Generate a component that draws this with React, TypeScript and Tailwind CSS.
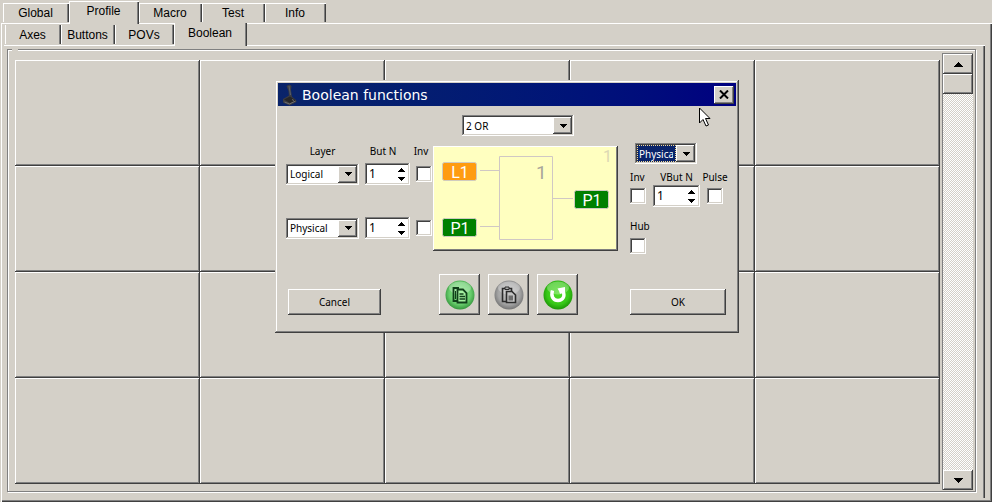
import React, { useState } from 'react';
import clsx from 'clsx';

const raised = 'bg-[#d4d0c8] shadow-[inset_-1px_-1px_0_#404040,inset_1px_1px_0_#fff,inset_-2px_-2px_0_#808080]';
const sunken = 'bg-white shadow-[inset_-1px_-1px_0_#fff,inset_1px_1px_0_#808080,inset_-2px_-2px_0_#d4d0c8,inset_2px_2px_0_#404040]';

interface TabItem {
  name: string;
  width: string;
}

const mainTabs: TabItem[] = [
  { name: 'Global', width: 'w-[66px]' },
  { name: 'Profile', width: 'w-[70px]' },
  { name: 'Macro', width: 'w-[63px]' },
  { name: 'Test', width: 'w-[63px]' },
  { name: 'Info', width: 'w-[61px]' },
];

const profileTabs: TabItem[] = [
  { name: 'Axes', width: 'w-[56px]' },
  { name: 'Buttons', width: 'w-[54px]' },
  { name: 'POVs', width: 'w-[59px]' },
  { name: 'Boolean', width: 'w-[73px]' },
];

const cells = Array.from({ length: 20 }, (_, i) => i + 1);

const Tabs: React.FC<{ items: TabItem[]; initial: string; className: string; topLine?: boolean }> = ({
  items,
  initial,
  className,
  topLine,
}) => {
  const [active, setActive] = useState(initial);

  return (
    <div role="tablist" className={clsx('flex items-end', className)}>
      {items.map(({ name, width }) => (
        <button
          key={name}
          role="tab"
          aria-selected={active === name}
          onClick={() => setActive(name)}
          className={clsx(
            'relative border-l border-l-white bg-[#d4d0c8] pr-0.5 text-center text-xs',
            'shadow-[inset_-1px_0_0_#404040,inset_-2px_0_0_#808080]',
            width,
            topLine && 'border-t border-t-white',
            active === name ? 'z-10 -mb-px h-[23px] pb-1' : 'mb-px h-[19px]'
          )}
        >
          {name}
        </button>
      ))}
    </div>
  );
};

const Arrow: React.FC<{ up?: boolean; large?: boolean }> = ({ up, large }) => (
  <svg
    viewBox="0 0 8 4"
    preserveAspectRatio="none"
    className={large ? 'h-[5px] w-2.5' : 'h-1 w-2'}
    shapeRendering="crispEdges"
    aria-hidden="true"
  >
    <path d={up ? 'M0 4h8L4 0z' : 'M0 0h8L4 4z'} />
  </svg>
);

const Combo: React.FC<{ label: string; options: string[]; className: string; focused?: boolean }> = ({
  label,
  options,
  className,
  focused,
}) => (
  <div className={clsx('relative h-[21px] p-0.5', sunken, className)}>
    <select
      aria-label={label}
      className={clsx(
        'block h-full w-full appearance-none overflow-hidden pl-0.5 outline-none',
        focused && 'bg-[#0a246a] pr-[22px] text-white'
      )}
    >
      {options.map((o) => (
        <option key={o}>{o}</option>
      ))}
    </select>
    {focused && (
      <span className="pointer-events-none absolute inset-y-0.5 left-0.5 right-[21px] border border-dotted border-[#f5db95]" />
    )}
    <span
      className={clsx('pointer-events-none absolute inset-y-0.5 right-0.5 flex w-[19px] items-center justify-center', raised)}
    >
      <Arrow />
    </span>
  </div>
);

const Spin: React.FC<{ label: string; className: string }> = ({ label, className }) => {
  const [value, setValue] = useState(1);

  return (
    <div className={clsx('flex h-[22px] p-0.5', sunken, className)}>
      <input
        type="number"
        aria-label={label}
        value={value}
        onChange={(e) => setValue(Number(e.target.value))}
        className="min-w-0 flex-1 appearance-none pl-0.5 text-xs outline-none [appearance:textfield] [&::-webkit-inner-spin-button]:appearance-none"
      />
      <div className="flex w-[14px] flex-col">
        <button aria-label={`${label} up`} onClick={() => setValue(value + 1)} className="flex flex-1 items-center justify-center">
          <Arrow up />
        </button>
        <button aria-label={`${label} down`} onClick={() => setValue(value - 1)} className="flex flex-1 items-center justify-center">
          <Arrow />
        </button>
      </div>
    </div>
  );
};

const Check: React.FC<{ id: string; label?: string }> = ({ id, label }) => (
  <input id={id} type="checkbox" aria-label={label} className={clsx('size-4 shrink-0 appearance-none checked:bg-gray-500', sunken)} />
);

const InputRow: React.FC<{ n: number; layers: string[] }> = ({ n, layers }) => (
  <div className="flex items-center gap-1.5">
    <Combo label={`Layer ${n}`} options={layers} className="w-[73px]" />
    <Spin label={`But N ${n}`} className="w-[45px]" />
    <Check id={`inv-${n}`} label={`Inv ${n}`} />
  </div>
);

const Diagram: React.FC = () => (
  <div className="mt-[3px] h-[105px] w-[185px] bg-[#ffffc0] shadow-[inset_-1px_-1px_0_#404040,inset_1px_1px_0_#fff,inset_-2px_-2px_0_#808080]">
    <svg viewBox="0 0 185 105" className="h-full w-full font-[Roboto,sans-serif]" role="img" aria-label="OR gate">
      <g fill="none" stroke="#d0c8c4">
        <path d="M66.5 10.5h53v83h-53z" />
        <path d="M47 24.5h19M47 80.5h19M120 52.5h20" />
      </g>
      <g stroke="#d0ccc0">
        <rect x="9.5" y="16.5" width="34" height="18" rx="2" fill="#ff9c10" />
        <rect x="9.5" y="72.5" width="34" height="18" rx="2" fill="#008000" />
        <rect x="141.5" y="44.5" width="34" height="18" rx="2" fill="#008000" />
      </g>
      <g fill="#fff" fontSize="16" textAnchor="middle">
        <text x="27" y="32">L1</text>
        <text x="27" y="88">P1</text>
        <text x="159" y="60">P1</text>
      </g>
      <text x="103" y="33" fontSize="19" fill="#a9a69a">1</text>
      <text x="170" y="16" fontSize="16" fill="#dcd8b4">1</text>
    </svg>
  </div>
);

const Ball: React.FC<{ id: string; light: string; mid: string; dark: string; children: React.ReactNode }> = ({
  id,
  light,
  mid,
  dark,
  children,
}) => (
  <svg viewBox="0 0 30 30" className="size-[30px]" aria-hidden="true">
    <defs>
      <radialGradient id={id} cx=".5" cy=".45" r=".58">
        <stop offset="0" stopColor={light} />
        <stop offset=".65" stopColor={mid} />
        <stop offset="1" stopColor={dark} />
      </radialGradient>
    </defs>
    <circle cx="15" cy="15" r="14.5" fill={`url(#${id})`} />
    <ellipse cx="15" cy="8" rx="11" ry="6.5" fill="#fff" opacity=".28" />
    {children}
  </svg>
);

const IconButton: React.FC<{ label: string; children: React.ReactNode }> = ({ label, children }) => (
  <button aria-label={label} className={clsx('flex size-[41px] items-center justify-center', raised)}>
    {children}
  </button>
);

const BooleanDialog: React.FC = () => (
  <div
    role="dialog"
    aria-label="Boolean functions"
    className="absolute left-[275px] top-20 z-20 w-[464px] bg-[#d4d0c8] p-[3px] font-['Noto_Sans',sans-serif] text-[10px] leading-4 shadow-[inset_-1px_-1px_0_#404040,inset_1px_1px_0_#d4d0c8,inset_-2px_-2px_0_#808080,inset_2px_2px_0_#fff]"
  >
    <div className="flex h-[23px] items-center bg-linear-to-r from-[#0a246a] to-[#000080] px-0.5 text-white">
      <svg viewBox="0 0 20 22" className="h-[22px] w-5" aria-hidden="true">
        <path d="M6.5 2l3-1.5L11.5 2 11 6l1 7H9L8.5 7z" fill="#3c3e44" />
        <path d="M3 15l7-4 6 5 .5 2-7 3.5-6.5-3z" fill="#3c3c40" />
        <path d="M4 15.5l6-3 6 4-6 2.5z" fill="#262628" />
        <path d="M9 2l1.5 9" fill="none" stroke="#5a606c" />
        <path d="M4.5 18l5 2 6-3M12 15.5l2 1" fill="none" stroke="#6c6c70" />
      </svg>
      <h2 className="ml-0.5 flex-1 font-['DejaVu_Sans',sans-serif] text-sm">Boolean functions</h2>
      <button aria-label="Close" className={clsx('flex h-[18px] w-5 items-center justify-center', raised)}>
        <svg viewBox="0 0 10 9" className="h-[9px] w-2.5" aria-hidden="true">
          <path d="M1 .5l8 8M9 .5l-8 8" stroke="#000" strokeWidth="2" />
        </svg>
      </button>
    </div>

    <div className="px-2 pb-[15px] pt-[9px]">
      <div className="pl-44">
        <Combo label="Function" options={['2 OR', '2 AND', '2 XOR']} className="w-28" />
      </div>

      <div className="mt-[7px] flex">
        <div className="w-[147px]">
          <div className="mb-1 flex gap-1.5 text-center">
            <span className="w-[73px]">Layer</span>
            <span className="w-9">But N</span>
            <label htmlFor="inv-1" className="ml-1 w-5">Inv</label>
          </div>
          <InputRow n={1} layers={['Logical', 'Physical']} />
          <div className="mt-8">
            <InputRow n={2} layers={['Physical', 'Logical']} />
          </div>
        </div>

        <Diagram />

        <div className="ml-3">
          <Combo label="Output layer" options={['Physical', 'Logical']} className="ml-[5px] w-[62px]" focused />
          <div className="mt-[5px] flex gap-[7px]">
            <label htmlFor="inv-out" className="w-4">Inv</label>
            <span className="w-[47px] text-center">VBut N</span>
            <label htmlFor="pulse" className="flex w-4 justify-center">Pulse</label>
          </div>
          <div className="flex items-center gap-[7px]">
            <Check id="inv-out" />
            <Spin label="VBut N" className="w-[47px]" />
            <Check id="pulse" />
          </div>
          <div className="mt-[11px] flex flex-col gap-1">
            <label htmlFor="hub">Hub</label>
            <Check id="hub" />
          </div>
        </div>
      </div>

      <div className="mt-5 flex items-end">
        <button className={clsx('ml-0.5 h-[26px] w-[93px]', raised)}>Cancel</button>
        <div className="ml-[58px] flex gap-2">
          <IconButton label="Copy">
            <Ball id="copy" light="#90ec90" mid="#68cc6c" dark="#2c8c34">
              <path d="M14 8H8.5v13H12" fill="none" stroke="#10401a" strokeWidth="1.8" />
              <path d="M10.5 11v8" stroke="#10401a" />
              <path d="M12.5 9.5H18l3.5 3.5v9.5h-9z" fill="#a4f0a0" stroke="#10401a" strokeWidth="1.8" />
              <path d="M14.5 14h4M14.5 16.5h5.5M14.5 19h5.5" stroke="#10401a" strokeWidth="1.5" />
            </Ball>
          </IconButton>
          <IconButton label="Paste">
            <Ball id="paste" light="#c8c8c8" mid="#a4a4a4" dark="#6c6c6c">
              <path d="M12 21.5H8.5v-13h9V11" fill="none" stroke="#2c2c2c" strokeWidth="1.6" />
              <path d="M11 7h4v2.5h-4z" fill="#aaa" stroke="#2c2c2c" />
              <path d="M12.5 11.5H18l3.5 3.5v7.5h-9z" fill="#c4c4c4" stroke="#2c2c2c" strokeWidth="1.6" />
              <path d="M14.5 15.5h4.5v5h-4.5z" fill="#6c6c6c" />
            </Ball>
          </IconButton>
          <IconButton label="Reset">
            <Ball id="reset" light="#50dc28" mid="#38c818" dark="#188c04">
              <path d="M9.5 10.5c-2 6 1 10 5.5 10s7.500-4 5-9" fill="none" stroke="#fff" strokeWidth="3.4" />
              <path d="M14.5 8.500l7.500-1.500v8l-2.800-2-2.200 1-1-3z" fill="#fff" />
            </Ball>
          </IconButton>
        </div>
        <button className={clsx('ml-[52px] h-[26px] w-24', raised)}>OK</button>
      </div>
    </div>
  </div>
);

const ScrollBar: React.FC = () => (
  <div className="flex w-[31px] flex-col border-l border-t border-[#808080] bg-[repeating-conic-gradient(#fff_0_25%,#d4d0c8_0_50%)] bg-size-[2px_2px]">
    <button aria-label="Scroll up" className={clsx('flex h-5 items-center justify-center', raised)}>
      <Arrow up large />
    </button>
    <div className={clsx('h-5', raised)} />
    <button aria-label="Scroll down" className={clsx('mt-auto flex h-5 items-center justify-center', raised)}>
      <Arrow large />
    </button>
  </div>
);

const App: React.FC = () => {
  return (
    <div className="relative flex h-screen flex-col bg-[#d4d0c8] pl-px font-['Liberation_Sans',sans-serif] text-black">
      <Tabs items={mainTabs} initial="Profile" className="h-[23px] pl-0.5" topLine />

      <main className="flex flex-1 flex-col border-l border-t border-white pb-1 pr-[7px] shadow-[inset_-1px_-1px_0_#404040,inset_-2px_-2px_0_#808080]">
        <Tabs items={profileTabs} initial="Boolean" className="h-[21px] pl-[3px]" />
        <section className="ml-0.5 flex flex-1 border-t border-white pb-1.5 pl-[3px] pr-[9px] pt-[3px] shadow-[inset_-1px_0_0_#404040,inset_-2px_0_0_#808080]">
          <fieldset className="relative flex flex-1 border border-[#808080] pb-px pl-[7px] pr-0.5 pt-[3px] shadow-[inset_1px_1px_0_#fff,1px_1px_0_#fff]">
            <span className="absolute -top-px left-1 h-0.5 w-1.5 bg-[#d4d0c8]" />
            <div className="mb-1.5 mr-0.5 mt-[7px] grid flex-1 grid-cols-5 grid-rows-4">
              {cells.map((n) => (
                <button key={n} aria-label={`Function ${n}`} className={raised} />
              ))}
            </div>
            <ScrollBar />
          </fieldset>
        </section>
      </main>

      <BooleanDialog />

      <svg viewBox="0 0 12 20" className="pointer-events-none absolute left-[699px] top-[107px] z-30 h-5 w-3" aria-hidden="true">
        <path d="M.5 1v15l3.5-3.5 3 6.5 2.5-1-3-6.5H11z" fill="#fff" stroke="#000" />
      </svg>
    </div>
  );
};

export default App;
